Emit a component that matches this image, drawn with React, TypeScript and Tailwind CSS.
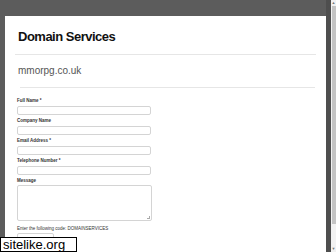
export default function App() {
  const fields = [
    { label: 'Full Name *' },
    { label: 'Company Name' },
    { label: 'Email Address *' },
    { label: 'Telephone Number *' },
  ];
  return (
    <div
      className="relative w-[336px] h-[252px] overflow-hidden bg-[#5c5c5c] flex"
      style={{ fontFamily: '"Liberation Sans", Arial, sans-serif' }}
    >
      <div className="ml-[5px] mt-[16px] w-[321px] h-[236px] bg-white flex flex-col">
        <div className="pl-[13px] pt-[13px] h-[38px] text-[13px] leading-[16px] font-bold text-[#111] tracking-[-0.5px]">
          Domain Services
        </div>
        <div className="mx-[10px] h-px bg-[#e6e6e6]" />
        <div className="pl-[13px] pt-[10px] h-[32px] text-[10px] leading-[12px] text-[#555]">
          mmorpg.co.uk
        </div>
        <div className="ml-[15px] mr-[11px] h-px bg-[#e6e6e6]" />
        <div className="pl-[12px] pt-[10px] flex flex-col">
          {fields.map((f) => (
            <div key={f.label} className="flex flex-col h-[20px]">
              <div className="text-[4.5px] leading-[6px] font-bold text-[#333]">{f.label}</div>
              <div className="mt-[2px] w-[134px] h-[9px] border border-[#d4d4d4] rounded-[2px] bg-white" />
            </div>
          ))}
          <div className="text-[4.5px] leading-[6px] font-bold text-[#333]">Message</div>
          <div className="mt-[1px] w-[135px] h-[36px] border border-[#d4d4d4] rounded-[2px] bg-white relative">
            <div className="absolute right-[1px] bottom-[1px] w-[3px] h-[3px] border-r border-b border-[#aaa]" />
          </div>
          <div className="mt-[5px] text-[4.5px] leading-[6px] text-[#333]">
            Enter the following code: DOMAINSERVICES
          </div>
          <div className="mt-[1px] w-[37px] h-[9px] border border-[#d4d4d4] rounded-[2px]" />
        </div>
      </div>
      <div className="w-[5px] h-full bg-[#4e4e4e]" />
      <div className="w-[5px] h-full bg-[#f2f2f2] flex flex-col items-center">
        <div className="h-[6px] text-[4px] leading-[6px] text-[#777]">▲</div>
        <div className="w-[4px] h-[218px] bg-[#c4c4c4]" />
        <div className="flex-1" />
        <div className="h-[6px] text-[4px] leading-[6px] text-[#777]">▼</div>
      </div>
      <div className="absolute left-0 bottom-0 w-[77px] h-[15px] bg-white border border-black flex items-center pl-[2px] text-[13px] leading-[15px] text-black">
        sitelike.org
      </div>
    </div>
  );
}
